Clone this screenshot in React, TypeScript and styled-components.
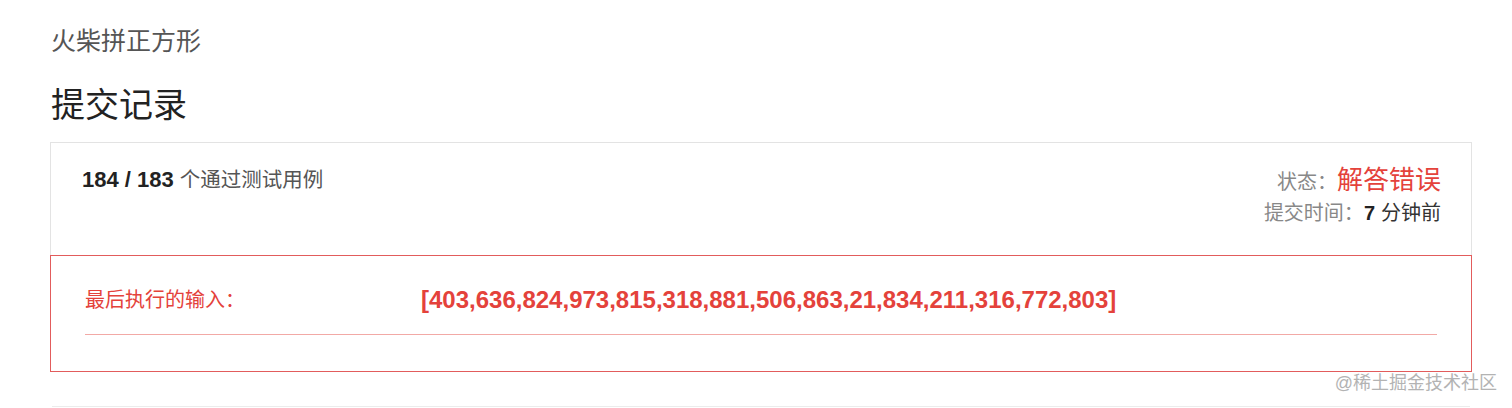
import React from "react";
import styled, { createGlobalStyle } from "styled-components";

const GlobalStyle = createGlobalStyle`
  *, *::before, *::after {
    box-sizing: border-box;
  }
  body {
    margin: 0;
    background: #fff;
    font-family: "Liberation Sans", "Noto Sans CJK SC", sans-serif;
  }
`;

const Page = styled.div`
  position: relative;
  width: 1472px;
  padding: 24px 0 0 50px;
`;

const ProblemTitle = styled.div`
  font-size: 25px;
  line-height: 34px;
  color: #555;
  padding-left: 1px;
`;

const Heading = styled.h2`
  margin: 25px 0 15px;
  font-size: 34px;
  line-height: 44px;
  font-weight: 400;
  color: #222;
  padding-left: 1px;
`;

const Summary = styled.div`
  height: 113px;
  border: 1px solid #e3e3e3;
  border-bottom: none;
  padding: 21px 30px 0 31px;
  display: flex;
  justify-content: space-between;
  align-items: flex-start;
`;

const PassedText = styled.div`
  font-size: 20.5px;
  line-height: 32px;
  color: #555;

  b {
    color: #222;
    font-size: 22px;
    margin-right: 6px;
  }
`;

const Meta = styled.div`
  display: flex;
  flex-direction: column;
  align-items: flex-end;
`;

const MetaLine = styled.div<{ $height: number }>`
  display: flex;
  align-items: baseline;
  line-height: ${({ $height }) => $height}px;
  font-size: 20px;
  color: #888;
`;

const StatusValue = styled.span`
  font-size: 26px;
  color: #e4423b;
`;

const TimeValue = styled.span`
  color: #333;
  font-size: 20px;

  b {
    color: #222;
    margin-right: 6px;
  }
`;

const ErrorBox = styled.div`
  border: 1px solid #e25c5c;
  padding: 28px 34px 36px;
`;

const ErrorRow = styled.div`
  display: grid;
  grid-template-columns: 336px 1fr;
  align-items: center;
  line-height: 32px;
  color: #e4423b;
`;

const ErrorLabel = styled.span`
  font-size: 20px;
`;

const ErrorValue = styled.span`
  font-size: 24px;
  font-weight: 700;
`;

const ErrorRule = styled.div`
  height: 1px;
  margin-top: 18px;
  background: #f2a9a6;
`;

const Divider = styled.div`
  height: 1px;
  margin: 34px 2px 0;
  background: #ececec;
`;

const Watermark = styled.div`
  position: absolute;
  right: -25px;
  top: 370px;
  font-size: 18px;
  line-height: 26px;
  color: #b3b3b3;
  white-space: nowrap;
`;

export default function App() {
  return (
    <Page>
      <GlobalStyle />
      <ProblemTitle>火柴拼正方形</ProblemTitle>
      <Heading>提交记录</Heading>
      <Summary>
        <PassedText>
          <b>184 / 183</b>个通过测试用例
        </PassedText>
        <Meta>
          <MetaLine $height={32}>
            状态：<StatusValue>解答错误</StatusValue>
          </MetaLine>
          <MetaLine $height={30}>
            提交时间：
            <TimeValue>
              <b>7</b>分钟前
            </TimeValue>
          </MetaLine>
        </Meta>
      </Summary>
      <ErrorBox>
        <ErrorRow>
          <ErrorLabel>最后执行的输入：</ErrorLabel>
          <ErrorValue>
            [403,636,824,973,815,318,881,506,863,21,834,211,316,772,803]
          </ErrorValue>
        </ErrorRow>
        <ErrorRule />
      </ErrorBox>
      <Divider />
      <Watermark>@稀土掘金技术社区</Watermark>
    </Page>
  );
}
